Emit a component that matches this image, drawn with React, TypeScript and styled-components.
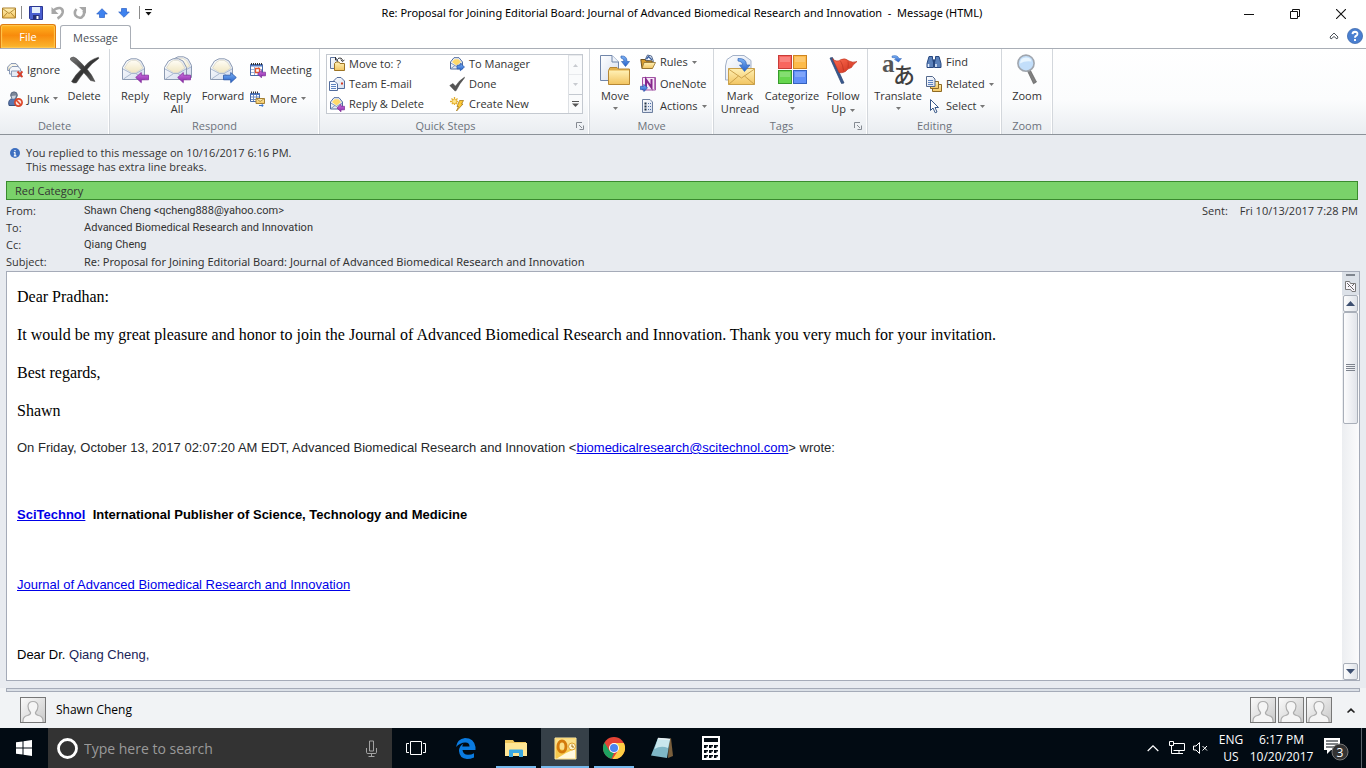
import React from "react";
import styled, { createGlobalStyle } from "styled-components";

const UI = `"Open Sans", "Noto Sans", sans-serif`;
const WIDE = `"Noto Sans", "Open Sans", sans-serif`;
const NARROW = `Roboto, "Open Sans", sans-serif`;

const Global = createGlobalStyle`
  *, *::before, *::after { box-sizing: border-box; }
  body { margin: 0; font-family: ${UI}; font-size: 11px; line-height: 14px; color: #333; background: #fff; }
  button, input { font: inherit; color: inherit; border: 0; background: none; padding: 0; margin: 0; }
  h1, h2, p, dl, dd, dt { margin: 0; font-weight: 400; font-size: inherit; }
  svg { display: block; flex: none; }
`;

/* ---------- icons ---------- */

type IconProps = { w: number; h?: number; children: React.ReactNode };
const Icon = ({ w, h = w, children }: IconProps) => (
  <svg width={w} height={h} viewBox={`0 0 ${w} ${h}`} aria-hidden="true">{children}</svg>
);

const HiddenDefs = styled.svg`position: absolute;`;
const Gradients = () => (
  <HiddenDefs aria-hidden="true" width="0" height="0">
    <defs>
      <linearGradient id="paper" x1="0" y1="0" x2="1" y2="1"><stop offset="0" stopColor="#fff" /><stop offset="1" stopColor="#d3dced" /></linearGradient>
      <linearGradient id="cream" x1="0" y1="0" x2="0" y2="1"><stop offset="0" stopColor="#fffdf6" /><stop offset="1" stopColor="#f0e6c2" /></linearGradient>
      <linearGradient id="gold" x1="0" y1="0" x2="0" y2="1"><stop offset="0" stopColor="#fff0b4" /><stop offset="1" stopColor="#f2c562" /></linearGradient>
      <linearGradient id="purple" x1="0" y1="0" x2="0" y2="1"><stop offset="0" stopColor="#d173e4" /><stop offset="1" stopColor="#8526a5" /></linearGradient>
      <linearGradient id="blue" x1="0" y1="0" x2="0" y2="1"><stop offset="0" stopColor="#7db3f6" /><stop offset="1" stopColor="#255fc8" /></linearGradient>
      <linearGradient id="dark" x1="0" y1="0" x2="1" y2="1"><stop offset="0" stopColor="#777" /><stop offset=".5" stopColor="#333" /><stop offset="1" stopColor="#666" /></linearGradient>
      <linearGradient id="person" x1="0" y1="0" x2="1" y2="1"><stop offset="0" stopColor="#fafafa" /><stop offset="1" stopColor="#c9c9c9" /></linearGradient>
      <linearGradient id="red" x1="0" y1="0" x2="1" y2="1"><stop offset="0" stopColor="#ff6d50" /><stop offset="1" stopColor="#c92d1b" /></linearGradient>
    </defs>
  </HiddenDefs>
);

const OpenEnvelope = ({ x = 0, y = 0 }: { x?: number; y?: number }) => (
  <g transform={`translate(${x} ${y})`}>
    <path d="M.5 9.5 4.500 3 9 .8H14.500L19 3 22.500 9.5V21.5H.5Z" fill="url(#paper)" stroke="#8c9ab2" />
    <path d="M2.500 10 6 4.500 9.500 2.300H14L17.500 4.500 20.800 10 14 14.5H9.500Z" fill="url(#cream)" stroke="#dbd8c8" strokeWidth=".8" />
    <path d="M1 11 9.500 15.500H14L22 11M1.500 21 9.500 15.600M21.500 21 14 15.600" fill="none" stroke="#a3b2ca" strokeWidth=".9" />
  </g>
);
const LeftArrow = ({ x, y }: { x: number; y: number }) => (
  <path transform={`translate(${x} ${y})`} d="M.7 5.5 6.3.5V3.2H13.5V7.8H6.3V10.7Z" fill="url(#purple)" stroke="#842e9e" strokeWidth=".8" />
);
const RightArrow = ({ x, y }: { x: number; y: number }) => (
  <path transform={`translate(${x} ${y})`} d="M13.3 5.5 7.7.5V3.2H.5V7.8H7.7V10.7Z" fill="url(#blue)" stroke="#2a57a8" strokeWidth=".8" />
);

const ReplyIcon = () => <Icon w={32}><OpenEnvelope x={3} y={4} /><LeftArrow x={16} y={18} /></Icon>;
const ReplyAllIcon = () => <Icon w={32}><OpenEnvelope x={8} y={2} /><OpenEnvelope x={3} y={4} /><LeftArrow x={16} y={18} /></Icon>;
const ForwardIcon = () => <Icon w={32}><OpenEnvelope x={3} y={4} /><RightArrow x={16} y={18} /></Icon>;
const DeleteIcon = () => (
  <Icon w={32}>
    <path d="M2.5 4Q5.500 1.700 8.500 4.500 13 8.500 16.500 12.500 22 5.500 30.500 3.200L30.800 4.400Q24 9 19.200 15.300 23.500 20 27 27.500L22.500 26.500Q19 22 15.800 18.800 11.500 24 8.500 28.800 5.500 29.800 3.500 27.500 7.500 20.500 13 15.500 8.500 10.500 2.500 6Z" fill="url(#dark)" stroke="#444" strokeWidth=".5" />
  </Icon>
);
const IgnoreIcon = () => (
  <Icon w={16}>
    <path d="M.7 5 4 1.600H9L11.500 4.500V8.500H.7Z" fill="url(#cream)" stroke="#8292b0" />
    <path d="M2.500 7 5 4.500H11L13.500 7V12H2.500Z" fill="#f5f7fb" stroke="#8a9bb8" />
    <path d="M4.500 9H14.500V14.500H4.500Z" fill="#e6ecf6" stroke="#8a9bb8" />
    <path d="m10.500 9.500 5 5.500m0-5.500-5 5.500" stroke="#d9412c" strokeWidth="1.900" />
  </Icon>
);
const JunkIcon = () => (
  <Icon w={16}>
    <circle cx="7" cy="4.200" r="3.300" fill="#7b8698" stroke="#56647b" />
    <path d="M2 14.500Q.5 8 6 7.500L10 8 11 14.500Z" fill="#5a77b0" stroke="#39527d" />
    <path d="m4.500 5 1 3 2.500-.5 1-3" fill="#cdd5df" />
    <circle cx="11.500" cy="11.500" r="3.600" fill="#fbe0da" stroke="#dc4527" strokeWidth="1.700" />
    <path d="m9.100 9 4.800 5" stroke="#dc4527" strokeWidth="1.600" />
  </Icon>
);
const MeetingIcon = () => (
  <Icon w={16}>
    <path d="M.5 2.500H12.500V13.500H.5Z" fill="#fff" stroke="#4669a8" />
    <path d="M.5 3.500H12.500" stroke="#4e77c0" strokeWidth="2" />
    <path d="M1 7.500H12M1 10.500H12M4.500 5V13M8.500 5V13" stroke="#9db2d8" />
    <path d="M1.500 1V3M3.500 1V3M5.500 1V3M7.500 1V3M9.500 1V3M11.500 1V3" stroke="#333" />
    <path d="M5.500 6.500H9.500V10.500H5.500Z" fill="#fff" stroke="#e3562b" strokeWidth="1.300" />
    <path d="m7.500 12 4-3.800v2H15.500v3.600h-4v2Z" fill="url(#purple)" stroke="#7c2d96" strokeWidth=".7" />
  </Icon>
);
const MoreIcon = () => (
  <Icon w={16}>
    <path d="M.5 2.500H9.500V10.500H.5Z" fill="#fff" stroke="#4669a8" /><path d="M.5 3H9.500" stroke="#4e77c0" strokeWidth="2" />
    <path d="M1 6H9M1 8.500H9M3.500 4V10M6.500 4V10" stroke="#6f8cc0" /><path d="M1.500.5V2.500M3.500.5V2.500M5.500.5V2.500M7.500.5V2.500" stroke="#333" />
    <path d="M6 7.500H14.500V12.500H6Z" fill="url(#gold)" stroke="#a58033" /><path d="m6 7.500 4.200 3 4.200-3" fill="none" stroke="#a58033" strokeWidth=".8" />
    <path d="M9 14.500H13M11.500 13l1.800 1.500L11.500 16" fill="none" stroke="#3b74c9" />
  </Icon>
);
const MiniEnvelope = () => (
  <><path d="M1.500 6 5 1.700H10L13.500 6V13H1.500Z" fill="url(#paper)" stroke="#526c9d" /><path d="M3 6 5.500 3.200H9.500L12 6 7.500 9.500Z" fill="#ffd96b" /><path d="m1.800 7 5.700 3.500L13.200 7M2 12.500 6 9.500" fill="none" stroke="#7790b8" strokeWidth=".9" /></>
);
const ToManagerIcon = () => <Icon w={16}><MiniEnvelope /><path d="m15.500 11-4.200-3.700v2H8v3.500h3.300v2Z" fill="url(#blue)" stroke="#2557ac" strokeWidth=".7" /></Icon>;
const ReplyDeleteIcon = () => <Icon w={16}><MiniEnvelope /><path d="m8 12 4-3.700v2H15.500v3.500H12v2Z" fill="url(#purple)" stroke="#7c2d96" strokeWidth=".7" /></Icon>;
const MoveToIcon = () => (
  <Icon w={16}>
    <path d="M1.500 1.500H6.500L8.500 4V12.500H1.500Z" fill="url(#paper)" stroke="#5c739d" />
    <path d="M9 2.500Q13 1 13.500 4.500M11.700 3.800 13.600 5.700 15.400 3.800M6.500 1v3h2.500" fill="none" stroke="#333" />
    <path d="M5.500 7.500 7 6H10L11 7.500H15.500V14.500H5.500Z" fill="url(#gold)" stroke="#9d7424" />
  </Icon>
);
const TeamIcon = () => (
  <Icon w={16}>
    <path d="M4.500 5 8 1.500H12L15.500 5V12.500H4.500Z" fill="url(#paper)" stroke="#526c9d" /><path d="M12 6.500h2v2h-2Z" fill="#d43c26" />
    <path d="M.5 5.500H6L8.500 8V14.500H.5Z" fill="#f7faff" stroke="#526c9d" /><path d="M2 8.500H7M2 10.500H7M2 12.500H7" stroke="#5d83c0" />
  </Icon>
);
const DoneIcon = () => <Icon w={16}><path d="M.8 9.500 4 7.500 6.400 10.200Q10 4.500 15.400 1.200L15.600 1.700Q10.500 7.500 7 14.800H5.800Z" fill="#555" stroke="#3e3e3e" strokeWidth=".5" /></Icon>;
const CreateIcon = () => (
  <Icon w={16}>
    <path d="M5.500 1V10M1 5.500H10M2.500 2.500l6 6M8.500 2.500l-6 6" stroke="#e3ad2a" strokeWidth="1.300" strokeDasharray="2 1" />
    <circle cx="5.500" cy="5.500" r="2.200" fill="#ffe58a" stroke="#e3ad2a" strokeWidth=".8" />
    <path d="M10.500 4.500H14.500L12.500 8H14L7.500 15 9.500 10.500H8Z" fill="#ffc934" stroke="#a67b1d" strokeWidth=".8" />
  </Icon>
);
const MoveIcon = () => (
  <Icon w={32}>
    <path d="M1.500 1.500H13L19.500 8V26.500H1.500Z" fill="url(#paper)" stroke="#7186aa" /><path d="M13 1.500V8H19.500" fill="#eef3fb" stroke="#7186aa" />
    <path d="M9.500 16.500 11 13.500H18L19.500 15H30.500V30.500H9.500Z" fill="#e3b04a" stroke="#b68734" /><path d="M10 16.500H30V30H10Z" fill="url(#gold)" />
    <path d="M22 2Q28 1.500 28 7.500H30.500L26.500 12.500 22.500 7.500H25Q25 4.500 22 4Z" fill="url(#blue)" stroke="#3566b5" strokeWidth=".7" />
  </Icon>
);
const RulesIcon = () => (
  <Icon w={16}>
    <path d="m5 6 2.500-5 4 1 2 5.500Z" fill="#f6f9ff" stroke="#53688c" /><path d="m6.500 5 2-2.500L12 6" fill="none" stroke="#3a5f9e" strokeWidth="1.400" />
    <path d="M.8 5.500H5L6 7H12V14.500H2Z" fill="#d89b2b" stroke="#6f5220" /><path d="M4 8.500H15.500L12.500 14.500H2Z" fill="url(#gold)" stroke="#91702c" strokeWidth=".8" />
  </Icon>
);
const OneNoteIcon = () => (
  <Icon w={16}>
    <path d="M2.500 1.500H15.500V14H2.500Z" fill="#f6e7f7" stroke="#a255a5" /><path d="M6 12V3.500L11.500 11.500V3" fill="none" stroke="#86288c" strokeWidth="2" />
    <path d="M14.500 2v11.500" stroke="#b878bb" /><path d="m7.500 12-3.700-3.700v2H.5v3.300h3.300v2Z" fill="url(#blue)" stroke="#2557ac" strokeWidth=".7" />
  </Icon>
);
const ActionsIcon = () => (
  <Icon w={16}><path d="M2.500 1.500H10L12.500 4V14.500H2.500Z" fill="url(#paper)" stroke="#6d7f9f" /><path d="M4.500 5.500h2M4.500 8.500h2M4.500 11.500h2" stroke="#223344" strokeWidth="1.800" /><path d="M8 5.500h3M8 8.500h3M8 11.500h3" stroke="#4e6fa5" strokeDasharray="1 1" /></Icon>
);
const MarkUnreadIcon = () => (
  <Icon w={32}>
    <path d="M1.500 12 3 5.500 9 1.500H20L27 6.500V26H1.500Z" fill="url(#paper)" stroke="#a3b1c8" />
    <path d="M4.500 14.500H30.500V30.500H4.500Z" fill="url(#gold)" stroke="#c9a04a" /><path d="m4.500 15 13 9 13-9M4.500 30.500l10-8.500M30.500 30.500l-10-8.500" fill="none" stroke="#c59a44" strokeWidth=".9" />
    <path d="M14 4.500Q22.500 4 22.500 11H26L20.500 17.500 15.500 11H18.500Q18.500 7.500 14 7Z" fill="url(#blue)" stroke="#3566b5" strokeWidth=".7" />
  </Icon>
);
const SWATCHES = [["#f8655f", "#c83c38", 2, 1], ["#fdbb4a", "#cf8520", 17, 1], ["#66d64e", "#389b2c", 2, 16], ["#6290f8", "#3562bf", 17, 16]] as const;
const CategorizeIcon = () => (
  <Icon w={32}>
    {SWATCHES.map(([f, s, x, y]) => (
      <React.Fragment key={f}><rect x={x + 0.5} y={y + 0.5} width="13" height="13" fill={f} stroke={s} /><rect x={x + 2} y={y + 2} width="10" height="5" fill="#fff" opacity=".2" /></React.Fragment>
    ))}
  </Icon>
);
const FollowIcon = () => (
  <Icon w={32}>
    <path d="M3 4 5.500 3.500 17 29 14.500 29.500Z" fill="#38598f" stroke="#294370" strokeWidth=".7" />
    <path d="M5.500 4.500Q9.500 9 14 5.500 18 3.500 22 7 25.500 9 30 7.500 26 10.500 24.500 13.500 20.500 14.500 18.500 17.500 14.500 19.500 12 18.500Z" fill="url(#red)" stroke="#b8301c" strokeWidth=".6" />
    <path d="M13.500 7Q16 11 16.500 16.500M21 7.500Q21.500 10 21 14" fill="none" stroke="#a52615" strokeWidth=".8" opacity=".6" />
  </Icon>
);
const Glyphs = styled.svg`overflow: visible;`;
const TranslateIcon = () => (
  <Glyphs width="32" height="32" viewBox="0 0 32 32" aria-hidden="true">
    <text x="0" y="18" fontFamily="Liberation Serif, serif" fontWeight="700" fontSize="25" fill="#565656">a</text>
    <text x="11" y="29" fontFamily="Noto Sans CJK JP, sans-serif" fontWeight="500" fontSize="22" fill="#3f3f3f">あ</text>
    <path d="M10 2Q15.500 .5 17 4.500H19.500L16.500 8 12.500 5.500H14.500Q13.500 3.500 10 3.500Z" fill="url(#blue)" stroke="#3566b5" strokeWidth=".5" />
  </Glyphs>
);
const FindIcon = () => (
  <Icon w={16}>
    <path d="M3 2.500H6.500V5L7.500 6.500V13.500H1V9.500Z" fill="#5b81ba" stroke="#27477f" /><path d="M9.500 2.500H13L15 9.500V13.500H8.500V6.500L9.500 5Z" fill="#5b81ba" stroke="#27477f" />
    <path d="M2.500 10v3M10 10v3" stroke="#e6f0ff" strokeWidth="1.500" /><path d="M6.500 6.500H9.500" stroke="#27477f" strokeWidth="2" />
  </Icon>
);
const RelatedIcon = () => (
  <Icon w={16}>
    <path d="M6.500 8.500H15.500V15.500H6.500Z" fill="url(#gold)" stroke="#8f6a23" /><path d="M4.500 5.500H12.500V12.500H4.500Z" fill="url(#gold)" stroke="#8f6a23" />
    <path d="M.5.5H6.500L9 3V10.500H.5Z" fill="url(#paper)" stroke="#53688c" /><path d="M2 4.500H7M2 6.500H7M2 8.500H7" stroke="#5d83c0" />
  </Icon>
);
const SelectIcon = () => <Icon w={16}><path d="M4.500 1.500V12.500L7 10 9.200 14.800 11 14 9 9.500H12.500Z" fill="#fff" stroke="#395889" /></Icon>;
const ZoomIcon = () => (
  <Icon w={32}>
    <path d="m16.500 17 2.500-1.500 6.500 12.500-3 1.800Z" fill="#808080" stroke="#555" strokeWidth=".6" />
    <circle cx="15" cy="9.200" r="8.100" fill="#c2defa" stroke="#a0a6ae" strokeWidth="1.600" /><path d="M9 9.500Q9 3.500 15 3.500 20 3.500 20.500 7.500 14 6.500 9 9.500Z" fill="#e8f5ff" />
  </Icon>
);
const MailIcon = () => <Icon w={14} h={12}><path d="M.5 1H13.500V11H.5Z" fill="url(#gold)" stroke="#ad812d" /><path d="m.5 1.500 6.500 5 6.500-5M.5 11l4.500-5M13.500 11 9 6" fill="none" stroke="#ad812d" strokeWidth=".9" /></Icon>;
const SaveIcon = () => <Icon w={14}><path d="M.5.5H13.500V13.500H1.500L.5 12.500Z" fill="#4a5fd0" stroke="#2b3792" /><path d="M3 1H11V7H3Z" fill="#e5effc" /><path d="M4 9H10.500V13.500H4Z" fill="#263079" /><path d="M7.500 10H9.500V13H7.500Z" fill="#fff" /></Icon>;
const UndoIcon = () => <Icon w={14}><path d="M1.500 5.500Q5 1.500 9 2 12.500 3 11.500 7 10.500 10.500 6.500 12.500" fill="none" stroke="#a7a7a7" strokeWidth="2.600" /><path d="M.5 1V8H7.500Z" fill="#a7a7a7" /></Icon>;
const RedoIcon = () => <Icon w={14}><path d="M3.500 3Q.8 6 2.500 9.500 5 12.500 8.500 11.500 12.500 8.500 10.500 4.500" fill="none" stroke="#a7a7a7" strokeWidth="2.600" /><path d="M6 1H13V7.500Z" fill="#a7a7a7" /></Icon>;
const UpIcon = () => <Icon w={12} h={10}><path d="m6 .7 5.300 5.300H8.500V9.500H3.500V6H.7Z" fill="#3e82ef" stroke="#2a5fc4" strokeWidth=".7" /></Icon>;
const DownIcon = () => <Icon w={12} h={10}><path d="m6 9.300 5.300-5.300H8.500V.5H3.500V4H.7Z" fill="#3e82ef" stroke="#2a5fc4" strokeWidth=".7" /></Icon>;
const CustomizeIcon = () => <Icon w={7} h={7}><path d="M0 .5H7" stroke="#111" strokeWidth="1.200" /><path d="M.5 3H6.500L3.500 6.500Z" fill="#111" /></Icon>;
const Launcher = () => <Icon w={8}><path d="M.5 6V.5H6M3 3l3 3M7.500 3.500v4h-4" fill="none" stroke="#858a92" /></Icon>;
const Caret = ({ color = "#777" }: { color?: string }) => <Icon w={5} h={3}><path d="M0 0H5L2.500 3Z" fill={color} /></Icon>;
const Person = () => (
  <Icon w={24}>
    <path d="M0 0H24V24H0Z" fill="url(#person)" />
    <path d="M2 24Q1.500 18.500 6.500 17.500 10 16.500 9.500 14.500 7 12 7 8 7.500 3.500 12 3.500 16.500 3.500 17 8 17 12 14.500 14.500 14 16.500 17.500 17.500 22.500 18.500 22 24" fill="#f5f5f5" stroke="#adadad" strokeWidth="1.200" />
  </Icon>
);

/* ---------- window frame ---------- */

const Window = styled.div`display: flex; flex-direction: column; min-height: 100vh; background: #fff;`;
const TitleBar = styled.header`display: flex; align-items: center; height: 25px; color: #000;`;
const QuickAccess = styled.div`display: flex; align-items: center; height: 22px; padding-left: 2px;`;
const ToolButton = styled.button<{ $w: number }>`display: flex; align-items: center; justify-content: center; width: ${(p) => p.$w}px; height: 22px;`;
const Rule = styled.span`width: 1px; height: 13px; margin: 0 5px; background: #8b8b8b;`;
const Title = styled.h1`flex: 1; padding-right: 14px; text-align: center; white-space: pre; font-family: ${WIDE};`;
const WindowButtons = styled.div`display: flex; padding: 3px 2px 0 0;`;
const WindowButton = styled.button`display: flex; align-items: center; justify-content: center; width: 46px; height: 22px;`;

const TabRow = styled.nav`display: flex; align-items: flex-end; height: 24px; border-bottom: 1px solid #a9aeb6;`;
const FileTab = styled.button`
  width: 56px; height: 24px; color: #fff; border: 1px solid #df7c10; border-bottom: 0; border-radius: 3px 3px 0 0;
  background: linear-gradient(#ffb31f, #f88b0c 45%, #fbb830); box-shadow: inset 0 0 1px 1px #ffc750;
`;
const Tab = styled.button`
  width: 71px; height: 24px; margin: 0 auto -1px 4px; background: #fff; color: #4a4f57;
  border: 1px solid #a9aeb6; border-bottom: 0; border-radius: 3px 3px 0 0;
`;
const TabTools = styled.div`display: flex; align-items: center; gap: 8px; height: 24px; padding-right: 3px;`;
const PlainButton = styled.button`display: flex;`;

/* ---------- ribbon ---------- */

const Ribbon = styled.div`display: flex; height: 86px; background: linear-gradient(#fff, #fbfcfd 60%, #eaedf1); border-bottom: 1px solid #8c9299;`;
const Group = styled.section<{ $w: number }>`
  display: flex; flex-direction: column; width: ${(p) => p.$w}px; flex: none;
  border-right: 1px solid #d3d7dc; box-shadow: inset -1px 0 #fff;
`;
const GroupBody = styled.div<{ $pad: number }>`display: flex; flex: 1; padding: 2px 0 0 ${(p) => p.$pad}px;`;
const GroupName = styled.div`display: flex; align-items: center; height: 16px; color: #6c727b;`;
const GroupTitle = styled.h2`flex: 1; text-align: center;`;
const LauncherButton = styled.button`display: flex; width: 18px; padding-left: 5px;`;
const BigButton = styled.button<{ $w: number }>`
  display: flex; flex-direction: column; align-items: center; width: ${(p) => p.$w}px; height: 67px; padding-top: 3px;
  line-height: 13px; white-space: nowrap;
`;
const BigLabel = styled.span`margin-top: 3px; text-align: center;`;
const BigCaret = styled.span`padding-top: 5px;`;
const InlineCaret = styled.span`display: inline-flex; padding-left: 4px; vertical-align: middle;`;
const Stack = styled.div<{ $row: number; $top?: number }>`
  display: flex; flex-direction: column; padding: ${(p) => p.$top ?? 0}px 0 0 2px;
  & > button { height: ${(p) => p.$row}px; }
`;
const SmallButton = styled.button`display: flex; align-items: center; gap: 4px; white-space: nowrap;`;

const Gallery = styled.div`display: flex; width: 257px; height: 60px; margin-top: 3px; border: 1px solid #c4c9d0; background: #fff;`;
const Steps = styled.div`display: grid; grid-template-columns: 120px 1fr; grid-auto-rows: 20px; flex: 1; margin-top: -1px; padding-left: 2px;`;
const GalleryScroll = styled.div`display: flex; flex-direction: column; width: 14px; border-left: 1px solid #dde0e4;`;
const GalleryButton = styled.button<{ $active?: boolean }>`
  display: flex; flex: 1; align-items: center; justify-content: center; background: #fafbfc;
  border-top: 1px solid ${(p) => (p.$active ? "#c4c9d0" : "#e8eaed")};
`;

type BigProps = { w: number; icon: React.ReactNode; lines: string[]; caret?: "below" | "inline" };
const Big = ({ w, icon, lines, caret }: BigProps) => (
  <BigButton $w={w}>
    {icon}
    <BigLabel>
      {lines[0]}
      {lines[1] && <><br />{lines[1]}</>}
      {caret === "inline" && <InlineCaret><Caret /></InlineCaret>}
    </BigLabel>
    {caret === "below" && <BigCaret><Caret /></BigCaret>}
  </BigButton>
);
const Small = ({ icon, label, caret }: { icon: React.ReactNode; label: string; caret?: boolean }) => (
  <SmallButton>{icon}{label}{caret && <Caret />}</SmallButton>
);
type GroupProps = { w: number; pad: number; name: string; launcher?: boolean; children: React.ReactNode };
const RibbonGroup = ({ w, pad, name, launcher, children }: GroupProps) => (
  <Group $w={w}>
    <GroupBody $pad={pad}>{children}</GroupBody>
    <GroupName><GroupTitle>{name}</GroupTitle>{launcher && <LauncherButton aria-label={`${name} options`}><Launcher /></LauncherButton>}</GroupName>
  </Group>
);

/* ---------- message ---------- */

const Message = styled.main`display: flex; flex-direction: column; flex: 1; background: #e8ebf0; padding: 11px 6px 7px;`;
const Info = styled.div`display: flex; gap: 6px; padding: 0 0 7px 4px;`;
const InfoIcon = styled.span`padding-top: 2px;`;
const Category = styled.div`height: 19px; margin-right: 2px; padding-left: 8px; line-height: 18px; background: #7ad26a; border: 1px solid #3a8a2e;`;
const Headers = styled.div`display: flex; justify-content: space-between; padding: 2px 2px 1px 0;`;
const Fields = styled.dl`display: grid; grid-template-columns: 78px auto; line-height: 17px;`;
const Address = styled.dd`font-family: ${NARROW};`;
const Subject = styled.dd`font-family: ${WIDE};`;
const Sent = styled.dl`display: flex; gap: 12px; line-height: 17px;`;
const Pane = styled.div`display: flex; flex: 1; border: 1px solid #a5abb8; background: #fff;`;
const Letter = styled.article`
  flex: 1; padding: 16px 10px 17px; color: #000; font-family: "Liberation Serif", serif; font-size: 16px; line-height: 18px;
  & > p + p { margin-top: 20px; }
`;
const Quoted = styled.div<{ $bold?: boolean; $top: number }>`
  margin-top: ${(p) => p.$top}px; font-family: "Liberation Sans", sans-serif; font-size: 13px; line-height: 16px;
  font-weight: ${(p) => (p.$bold ? 700 : 400)}; color: ${(p) => (p.$bold ? "#000" : "#26282a")}; white-space: pre-wrap;
`;
const Link = styled.a`color: #0000e8; text-decoration: underline;`;
const Navy = styled.span`color: #1b2458;`;
const Black = styled.span`color: #000;`;

const Scroll = styled.div`display: flex; flex-direction: column; width: 17px; padding: 0 1px; background: linear-gradient(90deg, #eceef1, #fbfbfc);`;
const SplitTools = styled.div`display: flex; flex-direction: column; align-items: center; gap: 4px; height: 23px; margin: 0 -1px; padding-top: 2px; background: #dce1e8;`;
const ScrollButton = styled.button`
  display: flex; align-items: center; justify-content: center; height: 17px; border: 1px solid #a9afb9; border-radius: 2px;
  background: linear-gradient(90deg, #fdfdfd, #dfe3e9);
`;
const Thumb = styled.div`
  display: flex; align-items: center; justify-content: center; height: 112px; margin-bottom: auto; border: 1px solid #a9afb9; border-radius: 2px;
  background: linear-gradient(90deg, #fcfcfd, #e1e4ea);
`;

/* ---------- people pane ---------- */

const People = styled.footer`background: #f1f3f5;`;
const Splitter = styled.div`height: 4px; margin: 0 6px; border: 1px solid #a5abb8; background: #dbe0e7;`;
const PeopleRow = styled.div`display: flex; align-items: center; height: 36px; padding: 0 11px 0 20px; color: #000; font-size: 12px;`;
const Avatar = styled.button`display: flex; width: 26px; height: 26px; border: 1px solid #777; overflow: hidden;`;
const PersonName = styled.span`flex: 1; padding-left: 10px;`;
const Avatars = styled.div`display: flex; gap: 2px; padding-right: 15px;`;

/* ---------- taskbar ---------- */

const Taskbar = styled.div`display: flex; height: 40px; background: #020b13; color: #fff;`;
const TaskButton = styled.button<{ $w?: number; $running?: boolean; $active?: boolean }>`
  display: flex; align-items: center; justify-content: center; width: ${(p) => p.$w ?? 48}px;
  background: ${(p) => (p.$active ? "#364048" : "none")};
  ${(p) => p.$running && `border-bottom: 2px solid #76b9ed; padding-top: 2px; margin: 0 ${p.$active ? 1 : 4}px;`}
`;
const Search = styled.label`display: flex; align-items: center; width: 344px; padding: 0 14px 0 9px; background: #333; gap: 6px;`;
const SearchInput = styled.input`flex: 1; min-width: 0; font-size: 14px; &::placeholder { color: #9a9a9a; opacity: 1; }`;
const Tray = styled.div`display: flex; align-items: center; margin-left: auto; font-size: 12px; line-height: 17px; text-align: center;`;
const TrayButton = styled.button<{ $w: number }>`display: flex; flex-direction: column; align-items: center; justify-content: center; width: ${(p) => p.$w}px; height: 40px; white-space: nowrap;`;
const ShowDesktop = styled.button`width: 5px; height: 40px; border-left: 1px solid #59626a;`;

export default function App() {
  return (
    <Window>
      <Global />
      <Gradients />
      <TitleBar>
        <QuickAccess>
          <ToolButton $w={14} aria-label="Mail"><MailIcon /></ToolButton>
          <Rule />
          <ToolButton $w={18} aria-label="Save"><SaveIcon /></ToolButton>
          <ToolButton $w={26} aria-label="Undo"><UndoIcon /></ToolButton>
          <ToolButton $w={18} aria-label="Redo"><RedoIcon /></ToolButton>
          <ToolButton $w={25} aria-label="Previous"><UpIcon /></ToolButton>
          <ToolButton $w={20} aria-label="Next"><DownIcon /></ToolButton>
          <Rule />
          <ToolButton $w={7} aria-label="Customize"><CustomizeIcon /></ToolButton>
        </QuickAccess>
        <Title>Re: Proposal for Joining Editorial Board: Journal of Advanced Biomedical Research and Innovation  -  Message (HTML)</Title>
        <WindowButtons>
          <WindowButton aria-label="Minimize"><Icon w={10}><path d="M0 5.500H10" stroke="#111" /></Icon></WindowButton>
          <WindowButton aria-label="Restore"><Icon w={10}><path d="M.5 2.500H7.500V9.500H.5ZM2.500 2.500V.5H9.500V7.500H7.500" fill="none" stroke="#111" /></Icon></WindowButton>
          <WindowButton aria-label="Close"><Icon w={10}><path d="m0 0 10 10M10 0 0 10" stroke="#111" strokeWidth="1.100" /></Icon></WindowButton>
        </WindowButtons>
      </TitleBar>

      <TabRow>
        <FileTab>File</FileTab>
        <Tab>Message</Tab>
        <TabTools>
          <PlainButton aria-label="Minimize ribbon"><Icon w={10} h={8}><path d="M1 5 5 1 9 5 8 7 5 4.500 2 7Z" fill="#fff" stroke="#4d535b" /></Icon></PlainButton>
          <PlainButton aria-label="Help"><Icon w={16}><circle cx="8" cy="8" r="7.600" fill="#4a7fd0" stroke="#3763a8" strokeWidth=".7" /><path d="M5.500 6.200Q5.700 3.800 8 3.800 10.600 3.900 10.400 6.200 10.200 7.300 9 7.900 8 8.500 8 9.700M8 11v2" fill="none" stroke="#fff" strokeWidth="1.900" /></Icon></PlainButton>
        </TabTools>
      </TabRow>

      <Ribbon>
        <RibbonGroup w={110} pad={5} name="Delete">
          <Stack $row={29} $top={4}><Small icon={<IgnoreIcon />} label="Ignore" /><Small icon={<JunkIcon />} label="Junk" caret /></Stack>
          <Big w={48} icon={<DeleteIcon />} lines={["Delete"]} />
        </RibbonGroup>
        <RibbonGroup w={210} pad={4} name="Respond">
          <Big w={42} icon={<ReplyIcon />} lines={["Reply"]} />
          <Big w={42} icon={<ReplyAllIcon />} lines={["Reply", "All"]} />
          <Big w={50} icon={<ForwardIcon />} lines={["Forward"]} />
          <Stack $row={29} $top={4}><Small icon={<MeetingIcon />} label="Meeting" /><Small icon={<MoreIcon />} label="More" caret /></Stack>
        </RibbonGroup>
        <RibbonGroup w={270} pad={6} name="Quick Steps" launcher>
          <Gallery>
            <Steps>
              <Small icon={<MoveToIcon />} label="Move to: ?" /><Small icon={<ToManagerIcon />} label="To Manager" />
              <Small icon={<TeamIcon />} label="Team E-mail" /><Small icon={<DoneIcon />} label="Done" />
              <Small icon={<ReplyDeleteIcon />} label="Reply & Delete" /><Small icon={<CreateIcon />} label="Create New" />
            </Steps>
            <GalleryScroll>
              <GalleryButton aria-label="Scroll up"><Icon w={5} h={3}><path d="M0 3H5L2.500 0Z" fill="#c8cbd0" /></Icon></GalleryButton>
              <GalleryButton aria-label="Scroll down"><Caret color="#c8cbd0" /></GalleryButton>
              <GalleryButton $active aria-label="More steps"><Icon w={7} h={6}><path d="M0 .5H7" stroke="#555" /><path d="M0 2.500H7L3.500 6Z" fill="#555" /></Icon></GalleryButton>
            </GalleryScroll>
          </Gallery>
        </RibbonGroup>
        <RibbonGroup w={124} pad={2} name="Move">
          <Big w={46} icon={<MoveIcon />} lines={["Move"]} caret="below" />
          <Stack $row={22}><Small icon={<RulesIcon />} label="Rules" caret /><Small icon={<OneNoteIcon />} label="OneNote" /><Small icon={<ActionsIcon />} label="Actions" caret /></Stack>
        </RibbonGroup>
        <RibbonGroup w={154} pad={2} name="Tags" launcher>
          <Big w={48} icon={<MarkUnreadIcon />} lines={["Mark", "Unread"]} />
          <Big w={56} icon={<CategorizeIcon />} lines={["Categorize"]} caret="below" />
          <Big w={46} icon={<FollowIcon />} lines={["Follow", "Up"]} caret="inline" />
        </RibbonGroup>
        <RibbonGroup w={134} pad={4} name="Editing">
          <Big w={52} icon={<TranslateIcon />} lines={["Translate"]} caret="below" />
          <Stack $row={22}><Small icon={<FindIcon />} label="Find" /><Small icon={<RelatedIcon />} label="Related" caret /><Small icon={<SelectIcon />} label="Select" caret /></Stack>
        </RibbonGroup>
        <RibbonGroup w={51} pad={2} name="Zoom"><Big w={46} icon={<ZoomIcon />} lines={["Zoom"]} /></RibbonGroup>
      </Ribbon>

      <Message>
        <Info>
          <InfoIcon><Icon w={10}><circle cx="5" cy="5" r="5" fill="#3d6fc0" /><path d="M5 2v1.300M5 4.200V8M3.800 4.600H5M3.800 7.800h2.600" stroke="#fff" strokeWidth="1.200" /></Icon></InfoIcon>
          <div><p>You replied to this message on 10/16/2017 6:16 PM.</p><p>This message has extra line breaks.</p></div>
        </Info>
        <Category>Red Category</Category>
        <Headers>
          <Fields>
            <dt>From:</dt><Address>Shawn Cheng &lt;qcheng888@yahoo.com&gt;</Address>
            <dt>To:</dt><Address>Advanced Biomedical Research and Innovation</Address>
            <dt>Cc:</dt><Address>Qiang Cheng</Address>
            <dt>Subject:</dt><Subject>Re: Proposal for Joining Editorial Board: Journal of Advanced Biomedical Research and Innovation</Subject>
          </Fields>
          <Sent><dt>Sent:</dt><dd>Fri 10/13/2017 7:28 PM</dd></Sent>
        </Headers>
        <Pane>
          <Letter>
            <p>Dear Pradhan:</p>
            <p>It would be my great pleasure and honor to join the Journal of Advanced Biomedical Research and Innovation. Thank you very much for your invitation.</p>
            <p>Best regards,</p>
            <p>Shawn</p>
            <Quoted $top={20}>On Friday, October 13, 2017 02:07:20 AM EDT, Advanced Biomedical Research and Innovation &lt;<Link href="#mail">biomedicalresearch@scitechnol.com</Link>&gt; wrote:</Quoted>
            <Quoted $top={51} $bold><Link href="#publisher">SciTechnol</Link>{"  "}International Publisher of Science, Technology and Medicine</Quoted>
            <Quoted $top={54}><Link href="#journal">Journal of Advanced Biomedical Research and Innovation</Link></Quoted>
            <Quoted $top={54}><Black>Dear Dr.</Black> <Navy>Qiang Cheng,</Navy></Quoted>
          </Letter>
          <Scroll>
            <SplitTools>
              <Icon w={9} h={2}><path d="M0 0H9V2H0Z" fill="#7f858e" /></Icon>
              <Icon w={13} h={13}><path d="M1.500 1.500H5.500L6.500 3.500H11.500V11.500H8L6.500 9.500H1.500Z" fill="#f8f5fa" stroke="#777" /><path d="m3 3 7 7M4 7l2-2M8 6l2-2" stroke="#555" strokeWidth=".9" /></Icon>
            </SplitTools>
            <ScrollButton aria-label="Scroll message up"><Icon w={9} h={5}><path d="M0 5H9L4.500 0Z" fill="#3d4f70" /></Icon></ScrollButton>
            <Thumb><Icon w={9} h={8}><path d="M0 .5H9M0 2.500H9M0 4.500H9M0 6.500H9" stroke="#7d838d" /></Icon></Thumb>
            <ScrollButton aria-label="Scroll message down"><Icon w={9} h={5}><path d="M0 0H9L4.500 5Z" fill="#3d4f70" /></Icon></ScrollButton>
          </Scroll>
        </Pane>
      </Message>

      <People>
        <Splitter />
        <PeopleRow>
          <Avatar aria-label="Shawn Cheng"><Person /></Avatar>
          <PersonName>Shawn Cheng</PersonName>
          <Avatars>{[1, 2, 3].map((n) => <Avatar key={n} aria-label={`Contact ${n}`}><Person /></Avatar>)}</Avatars>
          <PlainButton aria-label="Expand people pane"><Icon w={8} h={6}><path d="m0 5 4-4 4 4-1 1-3-2.500L1 6Z" fill="#222" /></Icon></PlainButton>
        </PeopleRow>
      </People>

      <Taskbar>
        <TaskButton aria-label="Start"><Icon w={16}><path d="M0 2.300 6.500 1.400V7.500H0ZM7.500 1.200 16 0V7.500H7.500ZM0 8.500H6.500V14.600L0 13.700ZM7.500 8.500H16V16L7.500 14.800Z" fill="#fff" /></Icon></TaskButton>
        <Search>
          <Icon w={21}><circle cx="10.500" cy="10.500" r="9" fill="none" stroke="#fff" strokeWidth="2.800" /></Icon>
          <SearchInput type="text" placeholder="Type here to search" aria-label="Search" />
          <Icon w={13} h={17}><path d="M4.500 1H8.500V11H4.500ZM1.500 8V12.500Q1.500 13.500 3 13.500H10Q11.500 13.500 11.500 12.500V8M6.500 14V16M3.500 16.500H9.500" fill="none" stroke="#a3a3a3" /></Icon>
        </Search>
        <TaskButton aria-label="Task view"><Icon w={20} h={14}><path d="M4.500.5H15.500V13.500H4.500ZM3 2.500H.5V11.500H3M17 2.500H19.500V11.500H17" fill="none" stroke="#fff" /></Icon></TaskButton>
        <TaskButton $w={52} aria-label="Edge"><Icon w={20} h={21}><path d="M0 9Q1 1 9 0 18 0 19.500 9V12H6.500Q7 16.500 12 16.800 15.500 16.800 18 15.300V19.500Q14.500 21 11 21 3.500 20.500 3 13 3 8 7.500 5.500 6.300 7 6.300 8.500H13.500Q13.500 4.500 9.500 4.500 4.500 4.300 0 9Z" fill="#0a7be0" /></Icon></TaskButton>
        <TaskButton $w={40} $running aria-label="File Explorer">
          <Icon w={22} h={19}><path d="M0 1H8L9.500 3H21V17H0Z" fill="#efc65b" /><path d="M0 4H22V17H0Z" fill="#ffe694" /><path d="M4 18V11.500Q4 10.500 5 10.500H17Q18 10.500 18 11.500V18H14V14H8V18Z" fill="#3aa9e3" /></Icon>
        </TaskButton>
        <TaskButton $w={48} $running $active aria-label="Outlook">
          <Icon w={23} h={23}><path d="M1 1H22V22H1Z" fill="#f6c94d" stroke="#ffe9a5" /><path d="M2 2H21V10Q10 16 2 10Z" fill="#fbe08a" /><path d="M3 21.500 12 16 21 12V21.500Z" fill="#fff8de" /><ellipse cx="8" cy="9.500" rx="4" ry="5.500" fill="none" stroke="#d37a0c" strokeWidth="3" /><circle cx="18" cy="9.500" r="3.500" fill="#fff4cc" stroke="#dca02c" /><path d="M18 7.500V10H20" fill="none" stroke="#a16c14" /></Icon>
        </TaskButton>
        <TaskButton $w={40} $running aria-label="Chrome">
          <Icon w={22}><circle cx="11" cy="11" r="11" fill="#e44335" /><path d="M1.500 5.500 6.500 14 11 16 8.500 21.800A11 11 0 0 1 1.500 5.500Z" fill="#1fa261" /><path d="M11 6H20.800A11 11 0 0 1 9.500 21.900L15.500 13Z" fill="#ffce44" /><circle cx="11" cy="11" r="5" fill="#fff" /><circle cx="11" cy="11" r="4" fill="#4b85f0" /></Icon>
        </TaskButton>
        <TaskButton aria-label="Notepad"><Icon w={22} h={22}><path d="M18 2 20 1 22 19 17 21Z" fill="#7a5f3c" /><path d="M7 1 19 2 16 21 0 18.500Z" fill="#7fb7c6" /><path d="M7 1 19 2 17 11Q10 8 3.500 12Z" fill="#c9e7ed" /><path d="M7 1.500 19 2.500" stroke="#e9eff1" strokeWidth="1.500" /></Icon></TaskButton>
        <TaskButton $w={50} aria-label="Calculator">
          <Icon w={18} h={24}><path d="M0 0H18V24H0Z" fill="#fff" /><path d="M2 2H16V6H2Z" fill="#020b13" />{[9, 14, 19].flatMap((y) => [2, 7, 12].map((x) => <path key={`${x}-${y}`} d={`M${x} ${y}h4v1.500h-1.500v1.500H${x}Z`} fill="#020b13" />))}</Icon>
        </TaskButton>
        <Tray>
          <TrayButton $w={22} aria-label="Hidden icons"><Icon w={12} h={7}><path d="m.7 6 5.300-5.200 5.300 5.200" fill="none" stroke="#fff" strokeWidth="1.200" /></Icon></TrayButton>
          <TrayButton $w={26} aria-label="Network"><Icon w={16} h={14}><path d="M4.500 2.500H15.500V9.500H4.500M10 9.500V12.500M6 12.500H14M.5.500H4.500V4.500H.5ZM2.500 4.500V12.500H6" fill="none" stroke="#fff" /></Icon></TrayButton>
          <TrayButton $w={20} aria-label="Volume muted"><Icon w={15} h={14}><path d="M.5 5H3L6.500 1.500V12.500L3 9H.5ZM9.500 5 14 9.500M14 5 9.500 9.500" fill="none" stroke="#fff" /></Icon></TrayButton>
          <TrayButton $w={42}><span>ENG</span><span>US</span></TrayButton>
          <TrayButton $w={59}><span>6:17 PM</span><span>10/20/2017</span></TrayButton>
          <TrayButton $w={50} aria-label="Notifications, 3 new">
            <Icon w={26} h={26}><path d="M1 3H17V15H8L4 19V15H1Z" fill="#fff" /><path d="M3 6H15M3 9H15M3 12H12" stroke="#020b13" /><circle cx="17" cy="17" r="8" fill="#333" stroke="#777" /><text x="17" y="21.500" textAnchor="middle" fill="#fff" fontSize="12" fontFamily="Open Sans, sans-serif">3</text></Icon>
          </TrayButton>
          <ShowDesktop aria-label="Show desktop" />
        </Tray>
      </Taskbar>
    </Window>
  );
}
